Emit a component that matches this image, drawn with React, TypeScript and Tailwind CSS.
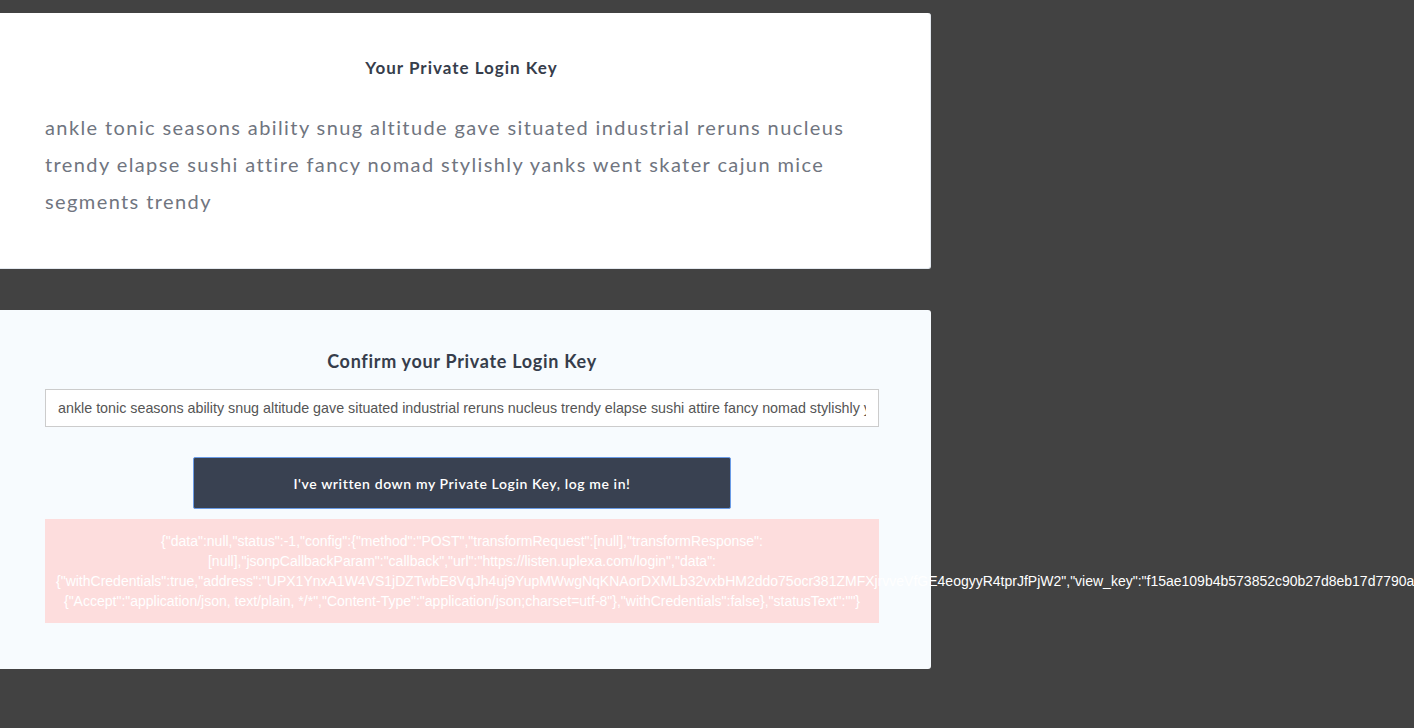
const KEY =
  "ankle tonic seasons ability snug altitude gave situated industrial reruns nucleus trendy elapse sushi attire fancy nomad stylishly yanks went skater cajun mice segments trendy";

const ERROR_TEXT =
  '{"data":null,"status":-1,"config":{"method":"POST","transformRequest":[null],"transformResponse":[null],"jsonpCallbackParam":"callback","url":"https://listen.uplexa.com/login","data":{"withCredentials":true,"address":"UPX1YnxA1W4VS1jDZTwbE8VqJh4uj9YupMWwgNqKNAorDXMLb32vxbHM2ddo75ocr381ZMFXjrvveVfGE4eogyyR4tprJfPjW2","view_key":"f15ae109b4b573852c90b27d8eb17d7790a3c61e0b1d6f4a9e2c7b5d3a8f0e12"},"headers":{"Accept":"application/json, text/plain, */*","Content-Type":"application/json;charset=utf-8"},"withCredentials":false},"statusText":""}';

export default function App() {
  return (
    <div className="min-h-screen bg-[#424242] pt-[13px] pb-[59px] font-['Lato','Liberation_Sans',sans-serif]">
      {/* key card */}
      <div className="w-[931px] h-[256px] bg-white rounded-r-[3px] border-r border-b border-[#e3e8ee] pl-[45px] pr-[52px] pt-[43px]">
        <h2 className="text-center text-[17px] leading-[24px] font-bold tracking-[1px] text-[#363d4b]">
          Your Private Login Key
        </h2>
        <p className="mt-[29px] text-[20px] leading-[37px] tracking-[1.4px] text-[#70757f] font-normal">
          {KEY}
        </p>
      </div>

      {/* confirm card */}
      <div className="mt-[41px] w-[931px] h-[359px] bg-[#f7fbfe] rounded-r-[3px] pl-[45px] pr-[52px] pt-[39px]">
        <h2 className="text-center text-[18px] leading-[24px] font-bold tracking-[0.7px] text-[#363d4b]">
          Confirm your Private Login Key
        </h2>
        <input
          type="text"
          defaultValue={KEY}
          className="mt-[16px] block w-full h-[38px] bg-white border border-[#cccccc] px-[12px] text-[14.3px] text-[#555555] font-['Liberation_Sans',Arial,sans-serif] outline-none"
        />
        <button className="mt-[30px] mx-auto flex items-center justify-center w-[538px] h-[52px] bg-[#394151] border border-[#6a9be6] rounded-[2px] text-white text-[14px] font-semibold tracking-[0.6px]">
          I've written down my Private Login Key, log me in!
        </button>
        <div className="mt-[10px] bg-[#fddddd] px-[11px] py-[12px] text-center text-white text-[14px] leading-[20px] font-['Liberation_Sans',Arial,sans-serif]">
          {ERROR_TEXT}
        </div>
      </div>
    </div>
  );
}
